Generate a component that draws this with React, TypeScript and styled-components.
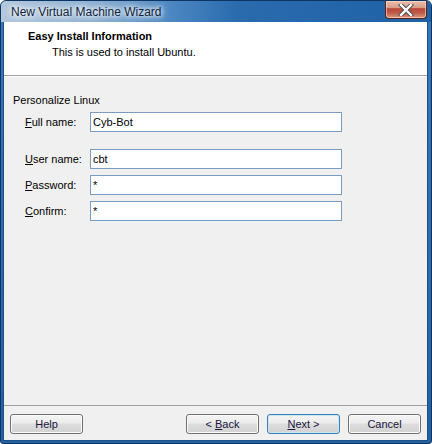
import React from "react";
import styled, { createGlobalStyle } from "styled-components";

const Global = createGlobalStyle`
  html, body { margin: 0; padding: 0; background: #ffffff; }
  body { font-family: "Liberation Sans", Arial, sans-serif; font-size: 11px; }
`;

const Window = styled.div`
  width: 432px;
  height: 444px;
  box-sizing: border-box;
  display: flex;
  flex-direction: column;
  background: linear-gradient(to bottom, #3b78b8, #2461a3);
  border: 1px solid #0d3563;
  border-radius: 6px 6px 3px 3px;
  overflow: hidden;
`;

const TitleBar = styled.div`
  height: 21px;
  flex: none;
  display: flex;
  align-items: center;
  justify-content: space-between;
  padding-left: 10px;
  padding-right: 4px;
  background: linear-gradient(
    to right,
    #b4c8dd 0%,
    #8db0d3 22%,
    #4b86c1 40%,
    #2a6bae 55%,
    #1f61a6 100%
  );
`;

const Title = styled.span`
  font-family: "Liberation Sans", Arial, sans-serif;
  font-size: 12px;
  color: #10243c;
  text-shadow: 0 0 4px #ffffff, 0 0 6px #ffffff, 0 0 8px rgba(255, 255, 255, 0.8);
  margin-top: 1px;
`;

const CloseButton = styled.div`
  width: 42px;
  height: 18px;
  margin-top: -3px;
  box-sizing: border-box;
  border: 1px solid #5a2418;
  border-top: none;
  border-radius: 0 0 4px 4px;
  background: linear-gradient(
    to bottom,
    #e8c0ae 0%,
    #d79c86 40%,
    #b8473a 45%,
    #c05a48 70%,
    #d99a88 100%
  );
  box-shadow: inset 0 0 0 1px rgba(255, 220, 200, 0.6);
  display: flex;
  align-items: center;
  justify-content: center;
`;

const Client = styled.div`
  flex: 1;
  display: flex;
  flex-direction: column;
  margin: 0 3px 2px 2px;
  background: #f0f0f0;
  border: 1px solid #1d4f86;
  border-top: none;
`;

const Header = styled.div`
  flex: none;
  height: 54px;
  box-sizing: border-box;
  background: #ffffff;
  padding: 8px 0 0 24px;
  border-bottom: 1px solid #a0a0a0;
  box-shadow: 0 1px 0 #ffffff;
  display: flex;
  flex-direction: column;
  gap: 3px;
`;

const HeaderTitle = styled.div`
  font-weight: bold;
  font-size: 11px;
  line-height: 13px;
  color: #000;
`;

const HeaderSub = styled.div`
  font-size: 11px;
  line-height: 13px;
  color: #000;
  padding-left: 24px;
`;

const Body = styled.div`
  flex: 1;
  padding: 18px 0 0 9px;
  display: flex;
  flex-direction: column;
`;

const GroupLabel = styled.div`
  font-size: 11px;
  line-height: 13px;
  color: #000;
  margin-bottom: 5px;
`;

const Row = styled.div<{ $gapAfter: number }>`
  display: flex;
  align-items: center;
  padding-left: 12px;
  margin-bottom: ${(p) => p.$gapAfter}px;
`;

const Label = styled.label`
  width: 65px;
  font-size: 11px;
  color: #000;
`;

const Field = styled.input`
  width: 252px;
  height: 20px;
  box-sizing: border-box;
  border: 1px solid #7a9cc0;
  background: #ffffff;
  font-family: "Liberation Sans", Arial, sans-serif;
  font-size: 11px;
  color: #000;
  padding: 0 2px;
  margin: 0;
  outline: none;
`;

const Footer = styled.div`
  flex: none;
  border-top: 1px solid #a0a0a0;
  padding: 8px 6px 6px 6px;
  display: flex;
  align-items: center;
`;

const Spacer = styled.div`
  flex: 1;
`;

const Button = styled.button<{ $default?: boolean; $gap?: number }>`
  width: 73px;
  height: 20px;
  box-sizing: border-box;
  margin: 0 0 0 ${(p) => p.$gap ?? 0}px;
  padding: 0;
  border: 1px solid ${(p) => (p.$default ? "#3c7fb1" : "#707070")};
  border-radius: 3px;
  background: linear-gradient(
    to bottom,
    #f4f4f4 0%,
    #ececec 45%,
    #dddddd 50%,
    #d2d2d2 100%
  );
  box-shadow: inset 0 0 0 1px ${(p) => (p.$default ? "#c8e8f8" : "#fbfbfb")};
  font-family: "Liberation Sans", Arial, sans-serif;
  font-size: 11px;
  color: #161640;
  line-height: 16px;
`;

const fields = [
  { key: "F", rest: "ull name:", value: "Cyb-Bot", gap: 17 },
  { key: "U", rest: "ser name:", value: "cbt", gap: 6 },
  { key: "P", rest: "assword:", value: "*", gap: 6 },
  { key: "C", rest: "onfirm:", value: "*", gap: 0 },
];

export default function App() {
  return (
    <>
      <Global />
      <Window>
        <TitleBar>
          <Title>New Virtual Machine Wizard</Title>
          <CloseButton>
            <svg width="16" height="12" viewBox="0 0 16 12">
              <path
                d="M3 1 L13 11 M13 1 L3 11"
                stroke="#4a4a4a"
                strokeWidth="4.2"
                strokeLinecap="square"
              />
              <path
                d="M3 1 L13 11 M13 1 L3 11"
                stroke="#ffffff"
                strokeWidth="2.4"
                strokeLinecap="square"
              />
            </svg>
          </CloseButton>
        </TitleBar>
        <Client>
          <Header>
            <HeaderTitle>Easy Install Information</HeaderTitle>
            <HeaderSub>This is used to install Ubuntu.</HeaderSub>
          </Header>
          <Body>
            <GroupLabel>Personalize Linux</GroupLabel>
            {fields.map((f) => (
              <Row key={f.key} $gapAfter={f.gap}>
                <Label>
                  <u>{f.key}</u>
                  {f.rest}
                </Label>
                <Field type="text" defaultValue={f.value} readOnly />
              </Row>
            ))}
          </Body>
          <Footer>
            <Button>Help</Button>
            <Spacer />
            <Button>
              &lt; <u>B</u>ack
            </Button>
            <Button $default $gap={8}>
              <u>N</u>ext &gt;
            </Button>
            <Button $gap={8}>Cancel</Button>
          </Footer>
        </Client>
      </Window>
    </>
  );
}
